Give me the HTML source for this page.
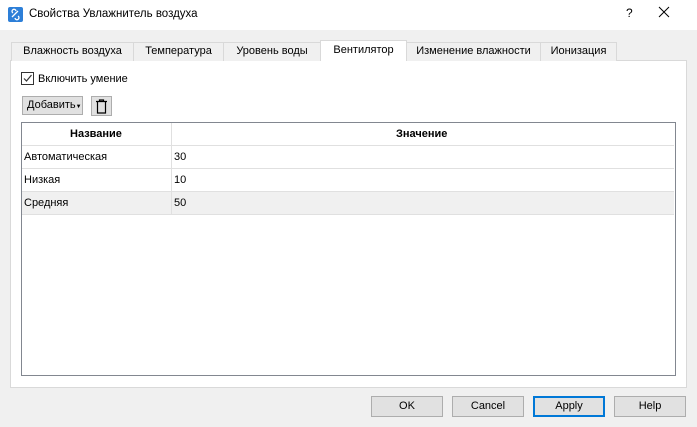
<!DOCTYPE html><html><head><meta charset="utf-8"><style>
*{box-sizing:border-box;margin:0;padding:0}
body{width:697px;height:427px;background:#f0f0f0;font:11px "Liberation Sans","Noto Sans CJK SC",sans-serif;color:#000;position:relative;overflow:hidden}
.a{position:absolute}
.title{left:0;top:0;width:697px;height:30px;background:#fff}
.tab{top:42px;height:19px;border:1px solid #d9d9d9;border-bottom:none;background:#f0f0f0;text-align:center;line-height:17px}
.btn{top:396px;width:72px;height:21px;border:1px solid #adadad;background:#e1e1e1;text-align:center;line-height:19px}
.row{left:22px;width:652px;height:23px;border-bottom:1px solid #e0e0e0;line-height:22px}
.row span{position:absolute;top:0}
</style></head><body>
<div class="a title"></div>
<div class="a" style="left:8px;top:7px;width:15px;height:15px;background:#2d7fd8;border-radius:2px"><svg width="15" height="15"><path d="M4 10 L10 4 M5 6 a2 2 0 1 1 3 -2 M10 9 a2 2 0 1 1 -3 2" stroke="#fff" stroke-width="1.3" fill="none"/></svg></div>
<div class="a" style="left:29px;top:8px;font-size:11.5px">Свойства Увлажнитель воздуха</div>
<div class="a" style="left:626px;top:6px;font-size:12px">?</div>
<div class="a" style="left:658px;top:6px"><svg width="12" height="12"><path d="M1 1L11 11M11 1L1 11" stroke="#000" stroke-width="1"/></svg></div>
<div class="a" style="left:10px;top:60px;width:677px;height:328px;background:#fff;border:1px solid #d9d9d9"></div>
<div class="a tab" style="left:11px;width:123px">Влажность воздуха</div>
<div class="a tab" style="left:133px;width:91px">Температура</div>
<div class="a tab" style="left:223px;width:98px">Уровень воды</div>
<div class="a tab" style="left:320px;top:40px;height:21px;width:87px;background:#fff;line-height:19px">Вентилятор</div>
<div class="a tab" style="left:406px;width:135px">Изменение влажности</div>
<div class="a tab" style="left:540px;width:77px">Ионизация</div>
<div class="a" style="left:21px;top:72px;width:13px;height:13px;border:1px solid #333;background:#fff"><svg width="11" height="11"><path d="M2 5.5 L4.5 8 L9.5 2" stroke="#333" stroke-width="1.2" fill="none"/></svg></div>
<div class="a" style="left:38px;top:73px">Включить умение</div>
<div class="a" style="left:22px;top:96px;width:61px;height:19px;border:1px solid #adadad;background:#e1e1e1;line-height:17px;padding-left:4px">Добавить<span style="font-size:6px">▼</span></div>
<div class="a" style="left:91px;top:96px;width:21px;height:20px;border:1px solid #adadad;background:#e1e1e1"><svg width="19" height="18"><path d="M4 4.5H15M7.5 4.5V3H11.5V4.5M5.5 5V16H13.5V5" stroke="#000" stroke-width="1.2" fill="none"/></svg></div>
<div class="a" style="left:21px;top:122px;width:655px;height:254px;border:1px solid #828790;background:#fff"></div>
<div class="a" style="left:171px;top:123px;width:1px;height:91px;background:#e0e0e0"></div>
<div class="a row" style="top:123px;font-weight:bold"><span style="left:48px">Название</span><span style="left:374px">Значение</span></div>
<div class="a row" style="top:146px"><span style="left:2px">Автоматическая</span><span style="left:152px">30</span></div>
<div class="a row" style="top:169px"><span style="left:2px">Низкая</span><span style="left:152px">10</span></div>
<div class="a row" style="top:192px;background:#f0f0f0"><span style="left:2px">Средняя</span><span style="left:152px">50</span></div>
<div class="a" style="left:171px;top:192px;width:1px;height:22px;background:#e0e0e0"></div>
<div class="a btn" style="left:371px">OK</div>
<div class="a btn" style="left:452px">Cancel</div>
<div class="a btn" style="left:533px;border:2px solid #0078d7;line-height:17px">Apply</div>
<div class="a btn" style="left:614px">Help</div>
</body></html>
